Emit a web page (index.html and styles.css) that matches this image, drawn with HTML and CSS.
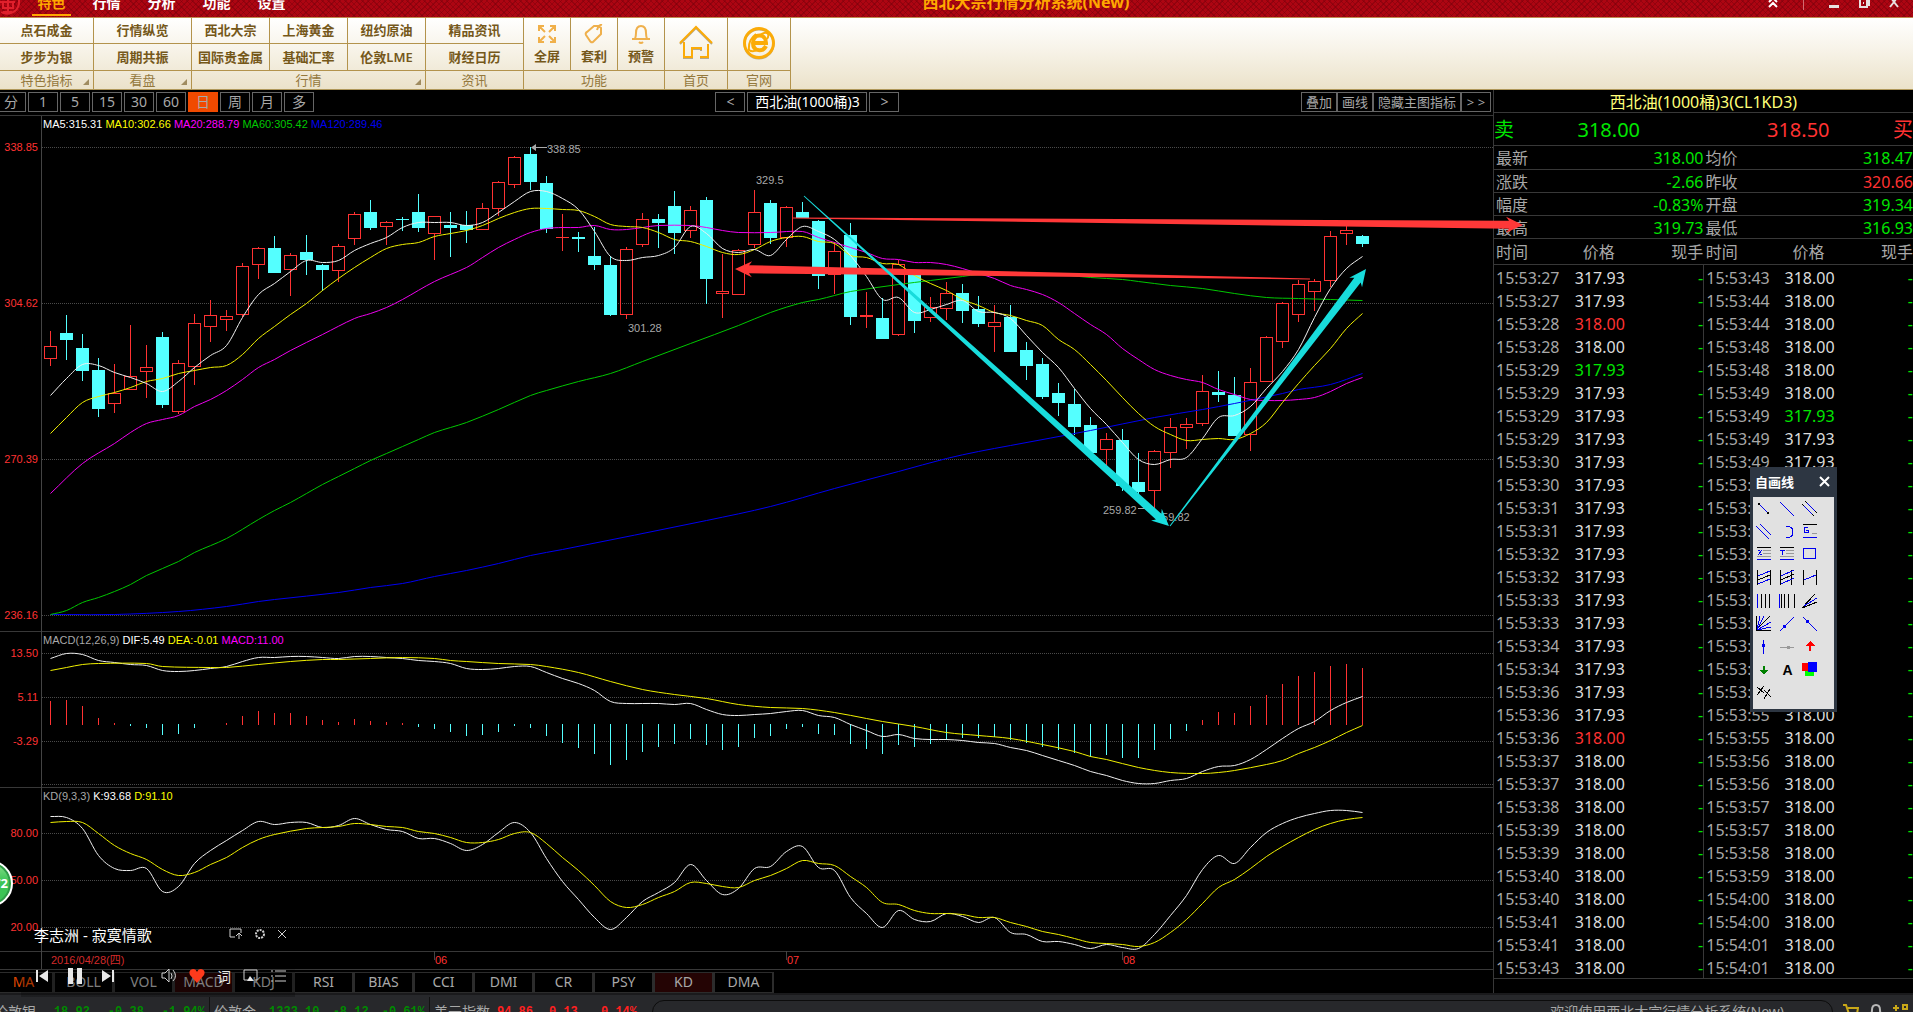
FILE: index.html
```
<!DOCTYPE html>
<html lang="zh-CN">
<head>
<meta charset="UTF-8">
<meta name="viewport" content="width=device-width, initial-scale=1.0">
<title>西北大宗行情分析系统(New)</title>
<link rel="stylesheet" href="styles.css">
</head>
<body>
<header class="titlebar">
    <svg class="logo" width="22" height="17" viewBox="0 0 22 17" fill="none" stroke="#e0202c" stroke-width="2">
        <path d="M1 12 A12 12 0 0 0 19 4 V0 M0 2 H15 M3 2 V8 H13 V2 M8 0 V14 M3 12 H12"/>
    </svg>
    <nav class="menu">
        <a href="#" class="active">特色</a>
        <a href="#">行情</a>
        <a href="#">分析</a>
        <a href="#">功能</a>
        <a href="#">设置</a>
    </nav>
    <div class="app-title">西北大宗行情分析系统(New)</div>
    <div class="window-buttons">
        <button aria-label="收起"><svg width="12" height="17" viewBox="0 0 12 17" fill="none" stroke="#fff" stroke-width="2"><path d="M2 2 L6 -2 L10 2 M2 7 L6 3 L10 7"/></svg></button>
        <span class="divider"></span>
        <button aria-label="最小化"><svg width="12" height="17"><path fill="#e8e0e0" d="M1 5h10v3H1z"/></svg></button>
        <button aria-label="还原"><svg width="12" height="17" fill="none" stroke="#e8e0e0" stroke-width="2"><path d="M2 0 V7 H9 V0 M11 0 V6"/><path d="M5 3 H6" /></svg></button>
        <button aria-label="关闭"><svg width="12" height="17" fill="none" stroke="#e8e0e0" stroke-width="2"><path d="M2 7 L6 2 L10 7 M4 -1 L6 2 L8 -1"/></svg></button>
    </div>
</header>

<div class="ribbon">
    <section class="group">
        <div class="cells cols-94">
            <button>点石成金</button>
            <button>步步为银</button>
        </div>
        <div class="group-name">特色指标<i class="corner"></i></div>
    </section>
    <section class="group">
        <div class="cells cols-98">
            <button>行情纵览</button>
            <button>周期共振</button>
        </div>
        <div class="group-name">看盘<i class="corner"></i></div>
    </section>
    <section class="group">
        <div class="cells cols-78">
            <button>西北大宗</button>
            <button>上海黄金</button>
            <button>纽约原油</button>
            <button>国际贵金属</button>
            <button>基础汇率</button>
            <button>伦敦LME</button>
        </div>
        <div class="group-name">行情<i class="corner"></i></div>
    </section>
    <section class="group">
        <div class="cells cols-98">
            <button>精品资讯</button>
            <button>财经日历</button>
        </div>
        <div class="group-name">资讯</div>
    </section>
    <section class="group">
        <div class="tools">
            <button>
                <svg width="20" height="20" fill="none" stroke="#f0b04a" stroke-width="2"><path d="M2 7V2H7M2 2L8 8M13 2H18V7M18 2L12 8M2 13V18H7M2 18L8 12M13 18H18V13M18 18L12 12"/></svg>
                全屏
            </button>
            <button>
                <svg width="20" height="20" fill="none" stroke="#efb04c" stroke-width="2"><path d="M3 8L10 2H15L17 4V10L9 18Q7 19 6 17L2 11Q1 9 3 8zM13 6Q15 0 18 1"/></svg>
                套利
            </button>
            <button>
                <svg width="20" height="20" fill="none" stroke="#efb04c" stroke-width="2"><path d="M1 15H19M4 15Q5 12 5 9Q5 2 10 2Q15 2 15 9Q15 12 16 15M8 18Q10 20 12 18"/></svg>
                预警
            </button>
        </div>
        <div class="group-name">功能</div>
    </section>
    <section class="group">
        <div class="tools big">
            <button aria-label="首页">
                <svg width="36" height="36" fill="none" stroke="#b5a98c" stroke-width="2"><path id="house" d="M2 19L18 3L34 19M6 18V33H14V24H23V26M22 33H30V20"/><use href="#house" stroke="#fbab08" y="-1"/></svg>
            </button>
        </div>
        <div class="group-name">首页</div>
    </section>
    <section class="group">
        <div class="tools big">
            <button aria-label="官网">
                <svg width="36" height="36" fill="none" stroke="#fbab08"><circle cx="18" cy="19" r="14.5" stroke="#b5a98c" stroke-width="2"/><circle cx="18" cy="18" r="14.5" stroke-width="3"/><path stroke-width="4" d="M12 18H25C25 8 12 8 12 18C12 27 22 27 25 21"/><path stroke-width="2" d="M15 9Q7 15 8 25Q12 28 18 24M19 10Q25 6 27 9Q28 11 26 14"/></svg>
            </button>
        </div>
        <div class="group-name">官网</div>
    </section>
</div>

<main class="workspace">
    <div class="chart-area">
        <div class="chart-toolbar">
            <div class="periods">
                <button>分</button><button>1</button><button>5</button><button>15</button><button>30</button><button>60</button><button class="active">日</button><button>周</button><button>月</button><button>多</button>
            </div>
            <div class="symbol">
                <button>&lt;</button><button class="name">西北油(1000桶)3</button><button>&gt;</button>
            </div>
            <div class="options">
                <button>叠加</button><button>画线</button><button>隐藏主图指标</button><button>&gt; &gt;</button>
            </div>
        </div>
        <svg id="chart" class="chart"></svg>
        <nav class="indicators">
            <button class="main">MA</button><button>BOLL</button><button>VOL</button><button class="on">MACD</button><button>KDJ</button><button>RSI</button><button>BIAS</button><button>CCI</button><button>DMI</button><button>CR</button><button>PSY</button><button class="on">KD</button><button>DMA</button>
        </nav>
    </div>

    <aside class="quote">
        <h1>西北油(1000桶)3(CL1KD3)</h1>
        <div class="deal">
            <span class="down">卖</span><b class="down">318.00</b><b class="up">318.50</b><span class="up">买</span>
        </div>
        <table class="stats">
            <tr><th>最新</th><td class="down">318.00</td><th>均价</th><td class="down">318.47</td></tr>
            <tr><th>涨跌</th><td class="down">-2.66</td><th>昨收</th><td class="up">320.66</td></tr>
            <tr><th>幅度</th><td class="down">-0.83%</td><th>开盘</th><td class="down">319.34</td></tr>
            <tr><th>最高</th><td class="down">319.73</td><th>最低</th><td class="down">316.93</td></tr>
        </table>
        <div class="ticks">
            <table>
                <thead><tr><th>时间</th><th>价格</th><th>现手</th></tr></thead>
                <tbody id="ticks-left"></tbody>
            </table>
            <table>
                <thead><tr><th>时间</th><th>价格</th><th>现手</th></tr></thead>
                <tbody id="ticks-right"></tbody>
            </table>
        </div>
    </aside>
</main>

<footer class="statusbar">
    <div class="index low"><span>伦敦银</span><b>18.92</b><b>-0.38</b><b>-1.94%</b></div>
    <div class="index low"><span>伦敦金</span><b>1333.10</b><b>-8.12</b><b>-0.61%</b></div>
    <div class="index high"><span>美元指数</span><b>94.86</b><b>0.13</b><b>0.14%</b></div>
    <div class="notice">欢迎使用西北大宗行情分析系统(New)</div>
    <div class="status-icons">
        <svg width="16" height="16" fill="none" stroke="#c9a818" stroke-width="2"><path d="M0 2H3L6 11H14L15 5H5M6 14H14"/></svg>
        <svg width="16" height="16" fill="none" stroke="#b8b8b8" stroke-width="2"><path d="M2 14Q4 10 4 7Q4 2 8 2Q12 2 12 7Q12 10 14 14z"/></svg>
        <svg width="16" height="16" fill="none" stroke="#c9a818" stroke-width="2"><path d="M3 2V8M0 5H6M10 2H14V6H10zM2 10H6V14H2zM10 10H14V14H10z"/></svg>
    </div>
</footer>

<!-- line drawing palette -->
<div class="palette">
    <div class="palette-head">自画线<button aria-label="关闭"><svg width="11" height="11" stroke="#fff" stroke-width="2"><path d="M1 1L10 10M10 1L1 10"/></svg></button></div>
    <div class="palette-grid">
        <button aria-label="线段"><svg><path class="b" d="M4 4L14 14"/><path class="fk" d="M3 3h2v2h-2zM12 12h2v2h-2z"/></svg></button>
        <button aria-label="直线"><svg><path class="b" d="M2 2L16 16"/></svg></button>
        <button aria-label="通道线"><svg><path class="b" d="M4 1L16 13M1 4L13 16"/><path class="k" d="M4 1L6 3M14 11L16 13M1 4L3 6M11 14L13 16"/></svg></button>
        <button aria-label="平行线"><svg><path class="b" d="M5 1L16 12M1 3L14 16"/></svg></button>
        <button aria-label="圆弧线"><svg><path class="b" d="M8 3Q15 3 15 9Q15 15 8 15"/></svg></button>
        <button aria-label="黄金分割"><svg><path class="k" d="M2 1.5H16"/><path class="g" d="M11 10.5H16"/><path class="b" d="M2 14.5H16M7 4H3V9H7V7H5"/></svg></button>
        <button aria-label="百分比线"><svg><path class="k" d="M2 1.5H16"/><path class="g" d="M8 4.5H16M8 7.5H16M2 10.5H16"/><path class="b" d="M2 13.5H16M3 9L7 4M3 4H5M5 8H7"/></svg></button>
        <button aria-label="波段线"><svg><path class="k" d="M2 1.5H16"/><path class="g" d="M8 4.5H16M8 7.5H16M2 10.5H16"/><path class="b" d="M2 13.5H16M2 4H7M4.500 4V9"/></svg></button>
        <button aria-label="矩形"><svg><path class="b" d="M2.500 2.500H14.500V12.500H2.500z"/></svg></button>
        <button aria-label="线性回归带"><svg><path class="k" d="M2.500 1V16M15.500 1V16M3 11L15 6"/><path class="b" d="M3 7L15 2M3 15L15 10"/></svg></button>
        <button aria-label="延长回归带"><svg><path class="k" d="M2.500 1V16M13.500 1V16M3 11L16 5"/><path class="b" d="M3 7L16 1M3 15L16 9"/></svg></button>
        <button aria-label="回归线"><svg><path class="k" d="M2.500 1V16M15.500 1V16"/><path class="b" d="M3 11L15 6"/></svg></button>
        <button aria-label="周期线"><svg><path class="b" d="M2.500 2V16"/><path class="k" d="M6.500 2V16M10.500 2V16M14.500 2V16"/></svg></button>
        <button aria-label="斐波那契周期"><svg><path class="b" d="M1.500 2V16"/><path class="k" d="M3.500 2V16M6.500 2V16M10.500 2V16M16.500 2V16"/></svg></button>
        <button aria-label="阻速线"><svg><path class="k" d="M1 16L14 2M1 16L16 10"/><path class="b" d="M3 14L16 6"/></svg></button>
        <button aria-label="江恩角度线"><svg><path class="k" d="M1.500 1V15.500H16M1 15L15 1"/><path class="b" d="M2 15L5 1M2 15L9 1M2 15L16 7M2 15L16 12"/></svg></button>
        <button aria-label="上升射线"><svg><path class="b" d="M2 16L16 2"/><path class="fb" d="M5 10h3v3h-3z"/></svg></button>
        <button aria-label="下降射线"><svg><path class="b" d="M2 2L16 16"/><path class="fb" d="M5 5h3v3h-3z"/></svg></button>
        <button aria-label="垂直线"><svg><path class="b" d="M8.500 2V16"/><path class="fb" d="M7 6h3v3h-3z"/></svg></button>
        <button aria-label="水平线"><svg><path class="g" d="M2 9.500H16"/><path fill="#999" d="M9 8h3v3h-3z"/></svg></button>
        <button aria-label="上箭头"><svg><path fill="#f00" d="M9 3L14 8H10V13H8V8H4z"/></svg></button>
        <button aria-label="下箭头"><svg><path fill="#008000" d="M9 14L13 9H10V5H8V9H5z"/></svg></button>
        <button class="letter">A</button>
        <button aria-label="颜色"><svg><path fill="#0f0" d="M4 9h9v6H4z"/><path fill="#f00" d="M1 2h8v8H1z"/><path fill="#00f" d="M7 1h9v10H7z"/></svg></button>
        <button aria-label="删除"><svg><path class="k" d="M2 3L9 9M2 11L9 2M9 6L16 13M9 15L15 5"/></svg></button>
    </div>
</div>

<!-- desktop music player -->
<div class="player">
    <div class="player-top">
        <span class="song">李志洲 - 寂寞情歌</span>
        <button aria-label="桌面歌词"><svg width="14" height="12"><path d="M12 5V1H1V9H6M10 11V5M7 8L10 5L13 8"/></svg></button>
        <button aria-label="设置"><svg width="12" height="12"><circle cx="6" cy="6" r="4" stroke-width="2" stroke-dasharray="2 1"/></svg></button>
        <button aria-label="关闭播放器"><svg width="10" height="10"><path d="M1 1L9 9M9 1L1 9"/></svg></button>
    </div>
    <div class="player-controls">
        <button aria-label="上一首"><svg width="14" height="16"><path class="solid" d="M1 2h2v12H1zM13 2V14L4 8z"/></svg></button>
        <button aria-label="暂停"><svg width="14" height="16"><path class="solid" d="M0 0h5v16H0zM9 0h5v16H9z"/></svg></button>
        <button aria-label="下一首"><svg width="14" height="16"><path class="solid" d="M11 2h2v12h-2zM1 2V14L10 8z"/></svg></button>
        <button aria-label="音量" class="wide"><svg width="16" height="16"><path d="M1 5H4L8 1V14L4 10H1zM10 5Q12 8 10 11M12 2Q17 8 12 13"/></svg></button>
        <button aria-label="喜欢"><svg width="16" height="16"><path fill="#ff3a1c" stroke="none" d="M8 15L1 7Q-1 2 4 1Q7 1 8 4Q9 1 12 1Q17 2 15 7z"/></svg></button>
        <button>词</button>
        <button aria-label="投屏"><svg width="16" height="16"><path d="M5 12H1V2H14V12H12"/><path class="solid" d="M4 13L7 8L11 13z"/></svg></button>
        <button aria-label="列表"><svg width="16" height="16"><path d="M0 3H2M4 3H15M0 8H2M4 8H15M0 13H2M4 13H15"/></svg></button>
    </div>
</div>

<div class="memory-ball">72</div>

<script src="script.js"></script>
</body>
</html>
```
FILE: styles.css
```
* {
    box-sizing: border-box;
}
html {
    height: 100%;
    overflow: hidden;
}
body {
    margin: 0;
    height: 100%;
    position: relative;
    overflow: hidden;
    background: #000;
    color: #a8a8a8;
    font-family: "Noto Sans", "Noto Sans CJK SC", sans-serif;
    font-size: 14px;
}
button {
    margin: 0;
    padding: 0;
    border: 0;
    background: none;
    color: inherit;
    font: inherit;
    white-space: nowrap;
}
svg {
    display: block;
}
.up {
    color: #ff3232;
}
.down {
    color: #00e600;
}

/* title bar */
.titlebar {
    display: flex;
    height: 18px;
    border-bottom: 1px solid #c08a50;
    background-color: #ad0512;
    background-image:
        repeating-linear-gradient(45deg, transparent 0 3px, rgba(110, 0, 10, 0.4) 3px 4px),
        repeating-linear-gradient(-45deg, transparent 0 3px, rgba(110, 0, 10, 0.4) 3px 4px);
    overflow: hidden;
}
.menu {
    display: flex;
    gap: 16px;
    margin-left: 10px;
}
.menu a {
    width: 39px;
    height: 16px;
    color: #fff;
    font-weight: bold;
    line-height: 6px;
    text-align: center;
    text-decoration: none;
    white-space: nowrap;
}
.menu a.active {
    color: #ffa800;
    border-bottom: 2px solid #ffa800;
}
.app-title {
    flex: 1;
    padding-right: 6px;
    color: #ffa800;
    font-size: 16px;
    font-weight: bold;
    line-height: 4px;
    text-align: center;
    white-space: nowrap;
}
.window-buttons {
    display: flex;
    gap: 18px;
    padding-right: 13px;
}
.window-buttons .divider {
    width: 1px;
    height: 10px;
    margin: 0 6px;
    background: #d46a70;
}

/* ribbon */
.ribbon {
    display: flex;
    height: 72px;
    border-bottom: 1px solid #b0985a;
    background: linear-gradient(#fff, #f7f3e8 45%, #ebe2ca);
    color: #75581a;
    font-size: 13px;
}
.group {
    display: flex;
    flex-direction: column;
    border-right: 1px solid #b3934c;
}
.cells {
    display: grid;
    grid-template-rows: 26px 27px;
}
.cols-94 {
    grid-template-columns: 93px;
}
.cols-98 {
    grid-template-columns: 97px;
}
.cols-78 {
    grid-template-columns: 78px 78px 77px;
}
.cells button {
    padding-bottom: 2px;
    border-bottom: 1px solid #b3934c;
    font-weight: 600;
}
.cols-78 button:not(:nth-child(3n)) {
    border-right: 1px solid #b3934c;
}
.tools {
    display: flex;
    height: 53px;
    border-bottom: 1px solid #b3934c;
}
.tools button {
    display: flex;
    flex-direction: column;
    align-items: center;
    gap: 2px;
    width: 47px;
    padding-top: 6px;
    font-weight: 600;
    line-height: 20px;
}
.tools button:first-child {
    width: 46px;
}
.tools button + button {
    border-left: 1px solid #b3934c;
}
.tools.big button {
    width: 62px;
    padding-top: 7px;
}
.group-name {
    position: relative;
    height: 18px;
    color: #94783c;
    line-height: 18px;
    text-align: center;
}
.corner {
    position: absolute;
    right: 4px;
    bottom: 4px;
    border: 3px solid #a08c60;
    border-top-color: transparent;
    border-left-color: transparent;
}

/* workspace */
.workspace {
    display: flex;
    height: 903px;
}
.chart-area {
    position: relative;
    z-index: 1;
    flex: 1;
    min-width: 0;
}
.chart-toolbar {
    display: flex;
    justify-content: space-between;
    height: 26px;
    padding: 2px 2px 3px 0;
    border-bottom: 1px solid #383838;
}
.chart-toolbar button {
    height: 20px;
    min-width: 30px;
    border: 1px solid #666;
    line-height: 18px;
}
.periods,
.symbol {
    display: flex;
    gap: 2px;
}
.periods {
    margin-left: -4px;
}
.periods .active {
    background: #f04a00;
    border-color: #f04a00;
}
.symbol .name {
    width: 120px;
    color: #fff;
}
.options {
    display: flex;
}
.options button {
    padding: 0 4px;
    font-size: 13px;
}
.chart {
    width: 100%;
    height: 854px;
    overflow: visible;
    font-family: "Liberation Sans", "Noto Sans CJK SC", sans-serif;
    font-size: 11px;
}
.chart .frame {
    stroke: #383838;
}
.chart .grid {
    stroke: #4a4a4a;
    stroke-dasharray: 1 1;
}
.chart .axis {
    fill: #ff3232;
}
.chart .date {
    fill: #d22a2a;
}
.chart .mark {
    fill: #a8a8a8;
}
.crisp {
    shape-rendering: crispEdges;
}
.indicators {
    display: flex;
    height: 23px;
    margin-left: -6px;
    padding-top: 2px;
}
.indicators button {
    width: 60px;
    height: 21px;
    padding-bottom: 2px;
    border: 1px solid #2c2c2c;
    border-right-width: 2px;
    background: #000;
    line-height: 17px;
}
.indicators .main {
    color: #e04800;
}
.indicators .on {
    background: #240404;
}

/* quote panel */
.quote {
    width: 420px;
    border-left: 1px solid #383838;
    font-size: 16px;
}
.quote h1 {
    height: 23px;
    margin: 0;
    border-bottom: 1px solid #383838;
    color: #ffff78;
    font-size: 16px;
    font-weight: normal;
    line-height: 24px;
    text-align: center;
}
.deal {
    display: grid;
    grid-template-columns: 20px 1fr 1fr 20px;
    height: 33px;
    border-bottom: 1px solid #383838;
    font-size: 20px;
    line-height: 34px;
    text-align: center;
}
.deal b {
    font-weight: normal;
}
.quote table {
    width: 100%;
    border-collapse: collapse;
    table-layout: fixed;
}
.quote th {
    padding: 2px 2px 0;
    font-weight: normal;
    text-align: left;
}
.quote td {
    padding: 2px 0 0;
}
.stats tr {
    height: 23px;
    border-bottom: 1px solid #383838;
    line-height: 20px;
}
.stats th {
    width: 40px;
}
.stats td {
    text-align: right;
}
.ticks {
    display: flex;
    border-bottom: 1px solid #383838;
}
.ticks table {
    flex: 1;
}
.ticks thead tr {
    height: 26px;
    border-bottom: 1px solid #383838;
    line-height: 23px;
}
.ticks table + table tbody {
    border-left: 1px solid #383838;
}
.ticks th:nth-child(2) {
    padding-left: 19px;
}
.ticks th:last-child,
.ticks td:last-child {
    padding-right: 0;
    text-align: right;
}
.ticks tbody tr {
    height: 23px;
    line-height: 19px;
}
.ticks td {
    padding: 4px 1px 0 2px;
}
.ticks td:nth-child(2) {
    padding-left: 11px;
}
.ticks .price {
    color: #dcdcdc;
}
.ticks .price.up {
    color: #ff3232;
}
.ticks .price.down {
    color: #00e600;
}

/* status bar */
.statusbar {
    display: flex;
    height: 40px;
    padding-top: 2px;
    border-top: 2px solid #1a1a1c;
    background: #27282b;
    line-height: 30px;
    white-space: nowrap;
}
.index {
    display: flex;
    justify-content: space-between;
    width: 220px;
    padding: 0 4px;
    border-right: 1px solid #111;
}
.index:first-child {
    width: 218px;
    margin-left: -8px;
    padding-left: 2px;
}
.index b {
    font-family: "Liberation Mono", monospace;
    font-size: 12px;
}
.index.low b {
    color: #008a00;
}
.index.high {
    justify-content: flex-start;
    gap: 7px;
    border: 0;
}
.index.high b {
    width: 50px;
    color: #ff2020;
}
.notice {
    flex: 1;
    margin: 3px 10px 0 2px;
    padding: 0 48px 0 0;
    border: 1px solid #0c0c0c;
    border-radius: 12px;
    line-height: 22px;
    text-align: right;
}
.status-icons {
    display: flex;
    gap: 9px;
    padding: 6px 4px 0 0;
}

/* drawing palette */
.palette {
    position: absolute;
    top: 467px;
    right: 76px;
    z-index: 2;
    width: 87px;
    padding: 0 3px 3px;
    background: #2d3642;
}
.palette-head {
    display: flex;
    justify-content: space-between;
    align-items: center;
    height: 30px;
    padding: 0 4px 2px 2px;
    color: #fff;
    font-size: 13px;
    font-weight: bold;
}
.palette-grid {
    display: grid;
    grid-template-columns: 23px 23px 23px;
    grid-auto-rows: 23px;
    height: 212px;
    padding: 0 2px;
    background: #e1e1e1;
}
.palette-grid button {
    padding: 0;
}
.palette-grid svg {
    width: 18px;
    height: 18px;
    fill: none;
    shape-rendering: crispEdges;
}
.palette-grid .letter {
    padding-right: 4px;
    color: #000;
    font: bold 14px "Liberation Sans", sans-serif;
}
.b {
    stroke: #0000f0;
}
.k {
    stroke: #000;
}
.g {
    stroke: #999;
}
.fb {
    fill: #0000f0;
}
.fk {
    fill: #000;
}

/* music player */
.player {
    position: absolute;
    top: 922px;
    left: 21px;
    z-index: 2;
    width: 274px;
    height: 75px;
    background: linear-gradient(transparent 60%, rgba(0, 0, 0, 0.25) 70%);
    color: #e8e8e8;
}
.player svg {
    fill: none;
    stroke: #d0d0d0;
}
.player .solid {
    fill: #e8e8e8;
    stroke: none;
}
.player-top {
    display: flex;
    align-items: center;
    gap: 11px;
    height: 24px;
    padding-left: 13px;
}
.song {
    width: 184px;
    color: #fff;
    font-size: 15px;
}
.player-controls {
    display: flex;
    align-items: center;
    gap: 12px;
    height: 32px;
    margin-top: 14px;
    padding-left: 14px;
}
.player-controls button:nth-child(-n+2) {
    margin-right: 7px;
}
.player-controls .wide {
    margin-left: 34px;
}

.memory-ball {
    position: absolute;
    top: 860px;
    left: -34px;
    z-index: 2;
    width: 47px;
    height: 47px;
    padding-right: 3px;
    border: 2px solid #fff;
    border-radius: 50%;
    background: linear-gradient(#8be08b, #3cc456 45%);
    box-shadow: inset 0 0 0 2px #2f9a48;
    color: #fff;
    font-size: 13px;
    font-weight: bold;
    line-height: 42px;
    text-align: right;
}
```
FILE: script.js
```
const svg = document.getElementById('chart');
const NS = 'http://www.w3.org/2000/svg';
const FIRST = 50;
const STEP = 16;
const ZERO = 724;

// the plot data is in screen rows, the svg begins at row 116
const root = document.createElementNS(NS, 'g');
root.setAttribute('transform', 'translate(0,-116)');
svg.appendChild(root);

function add(tag, attrs, text) {
    const el = document.createElementNS(NS, tag);
    for (const k in attrs) el.setAttribute(k, attrs[k]);
    if (text) el.textContent = text;
    root.appendChild(el);
    return el;
}

function hline(y, cls, x1) {
    add('line', { x1: x1, x2: '100%', y1: y + 0.5, y2: y + 0.5, class: cls + ' crisp' });
}

function vline(x, y1, y2, color) {
    add('rect', { x: x, y: y1, width: 1, height: y2 - y1, fill: color, class: 'crisp' });
}

function label(x, y, text, cls, anchor) {
    add('text', { x: x, y: y, class: cls, 'text-anchor': anchor || 'start' }, text);
}

function legend(y, parts) {
    const t = add('text', { x: 43, y: y });
    parts.forEach(p => {
        const s = document.createElementNS(NS, 'tspan');
        s.setAttribute('fill', p[1]);
        s.textContent = p[0] + ' ';
        t.appendChild(s);
    });
}

// frame and grid
[631, 787, 951, 969].forEach(y => hline(y, 'frame', 0));
vline(41, 116, 969, '#444');
[[147, '338.85'], [303, '304.62'], [459, '270.39'], [615, '236.16'],
 [653, '13.50'], [697, '5.11'], [741, '-3.29'], [784, ''],
 [833, '80.00'], [880, '50.00'], [927, '20.00']].forEach(g => {
    hline(g[0], 'grid', 42);
    label(38, g[0] + 4, g[1], 'axis', 'end');
});
label(51, 964, '2016/04/28(四)', 'date');
[[434, '06'], [786, '07'], [1122, '08']].forEach(m => {
    vline(m[0], 951, 960, '#444');
    label(m[0] + 1, 964, m[1], 'axis');
});

// candles: direction, high, body top, body bottom, low
const candles = `u331,346,358,366 d315,333,340,360 d334,348,371,381 d358,370,409,417 u364,393,403,413
u325,376,389,389 u345,367,371,398 d332,337,405,408 u360,363,411,414 u314,323,366,385
u300,315,326,342 u310,316,319,331 u263,266,314,317 u247,248,264,279 d236,248,273,273
u253,255,269,296 d235,252,260,275 d264,265,270,291 u244,246,270,282 u212,214,238,245
d200,212,228,230 u221,222,226,245 d217,219,220,231 d194,212,228,232 u216,216,233,260
d212,225,228,257 d211,225,230,243 u203,208,229,229 u181,182,208,216 u156,157,184,188
d147,154,182,190 d176,183,229,233 u214,237,237,251 d232,237,239,252 d227,256,265,270
d256,265,315,316 u247,249,314,319 u213,219,244,247 d214,219,223,248 d191,206,233,254
u206,210,230,238 d197,200,279,304 u254,291,293,318 u249,250,294,294 u190,212,244,248
d200,203,238,244 u206,207,237,247 d202,212,218,218 d220,221,276,289 u242,251,274,294
d223,235,317,325 u292,315,316,328 d298,318,339,339 u260,264,334,336 d273,275,321,333
u297,307,317,322 u282,293,308,320 d284,293,311,323 d296,309,324,327 u305,322,326,352
d305,317,352,352 d342,350,366,380 d358,364,397,399 d383,393,403,416 d389,404,427,435
d417,425,453,453 u433,439,449,466 d429,440,486,491 d453,482,492,496 u450,451,490,508
u418,427,452,468 u418,424,427,449 u375,391,423,426 d371,392,395,402 d377,395,436,436
u368,382,434,451 u336,337,381,381 u302,303,341,348 u280,284,314,322 u279,281,291,311
u231,236,280,287 u226,230,233,245 d235,236,244,247`.split(/\s+/);

candles.forEach((c, i) => {
    const x = FIRST + i * STEP;
    const v = c.slice(1).split(',').map(Number);
    if (c[0] === 'd') {
        vline(x, v[0], v[3], '#54ffff');
        add('rect', { x: x - 6, y: v[1], width: 13, height: v[2] - v[1], fill: '#54ffff', class: 'crisp' });
    } else {
        vline(x, v[0], v[1], '#ff3232');
        vline(x, v[2], v[3], '#ff3232');
        add('rect', { x: x - 5.5, y: v[1] + 0.5, width: 12, height: v[2] - v[1], fill: 'none', stroke: '#ff3232', class: 'crisp' });
    }
});

// a doji has no body, only the cross bar
add('rect', { x: FIRST + 32 * STEP - 6, y: 237, width: 13, height: 1, fill: '#ff3232', class: 'crisp' });

// smooth line through "index:row" points; a point without an index follows the one before
function curve(data, color) {
    let next = 0;
    const p = data.split(/\s+/).map(s => {
        const a = s.split(':');
        if (a.length > 1) next = +a[0];
        return [FIRST + 0.5 + STEP * next++, +a[a.length - 1] + 0.5];
    });
    const slope = (a, b) => (b[1] - a[1]) / (b[0] - a[0]);
    let d = `M${p[0]}`;
    for (let i = 0; i < p.length - 1; i++) {
        const a = p[i - 1] || p[i], b = p[i], c = p[i + 1], e = p[i + 2] || c;
        const w = (c[0] - b[0]) / 3;
        const s1 = slope(a, c);
        const s2 = slope(b, e);
        d += `C${b[0] + w},${b[1] + s1 * w} ${c[0] - w},${c[1] - s2 * w} ${c[0]},${c[1]}`;
    }
    add('path', { d: d, fill: 'none', stroke: color });
}

const WHITE = '#f0f0f0', YELLOW = '#f0f000', PINK = '#f000f0', GREEN = '#00c800', BLUE = '#0000f0';

curve('614 614 4:614 8:611 11:606 13:601 599 18:592 20:587 22:583 24:576 26:570 28:563 30:555 32:549 41:520 45:506 49:488 53:471 56:458 58:451 60:445 65:430 69:417 72:409 74:403 77:393 389 80:384 82:373', BLUE);
curve('614 610 602 597 591 584 575 8:561 552 11:538 13:519 510 502 493 484 476 468 460 453 446 439 432 427 422 28:409 30:395 390 33:381 35:373 37:361 40:343 43:325 45:312 47:302 299 295 291 53:284 55:280 57:276 274 62:273 65:277 67:279 281 283 285 72:288 74:293 76:297 78:298 80:299 82:300', GREEN);
curve('493 2:463 4:443 432 423 419 415 406 399 390 379 367 359 350 17:334 19:318 313 307 299 24:281 26:267 257 247 239 232 228 227 227 225 229 229 227 225 40:225 227 230 232 45:232 47:231 237 242 247 252 258 259 262 262 264 268 273 278 285 289 294 302 313 324 334 348 359 369 375 379 382 389 394 399 400 400 399 397 391 383 377', PINK);
curve('433 417 402 396 392 387 381 378 373 370 367 365 354 338 326 314 303 290 278 267 257 248 244 242 236 233 230 225 218 212 208 208 209 210 216 224 226 227 232 239 241 246 252 254 249 241 237 236 241 243 255 257 263 264 275 283 290 299 305 312 315 320 325 339 349 364 380 397 413 426 434 440 439 438 439 433 422 402 383 365 348 328 313', YELLOW);
curve('395 378 364 365 372 377 383 391 381 367 355 345 317 294 283 271 260 262 260 250 243 237 227 222 222 222 225 222 212 201 191 191 198 209 231 256 260 257 255 247 226 233 248 252 249 255 239 226 231 239 255 276 299 297 312 309 304 300 311 312 318 335 352 367 388 408 424 442 459 464 459 457 438 417 415 406 388 371 349 317 288 268 256', WHITE);

// MACD histogram, height above the zero row
[23, 24, 18, 6, 1, -2, -4, -11, -10, -4, 0, 1, 8, 13, 11, 11, 8, 4, 2, 5, 3, 2, 1, -3, -5, -8, -12, -11, -8, -2,
 -4, -12, -19, -24, -30, -41, -36, -28, -23, -20, -15, -21, -26, -23, -14, -12, -5, -3, -10, -11, -20, -25, -30,
 -21, -23, -20, -16, -14, -14, -13, -16, -19, -23, -26, -29, -33, -31, -34, -34, -26, -15, -7,
 4, 12, 11, 18, 29, 40, 48, 52, 58, 60, 56].forEach((h, i) => {
    const x = FIRST + i * STEP;
    if (h > 0) vline(x, ZERO - h, ZERO + 1, '#ff3232');
    if (h < 0) vline(x, ZERO, ZERO - h, '#54ffff');
});
curve('658 653 654 660 662 664 665 670 671 670 668 666 661 657 657 656 656 657 658 656 656 657 658 660 661 663 668 669 668 666 666 672 678 683 690 701 703 703 703 704 703 709 714 715 714 713 711 710 715 717 724 730 736 734 738 739 739 740 742 743 747 750 755 760 765 771 775 780 783 783 780 778 771 766 765 759 749 738 728 721 710 702 696', WHITE);
curve('670 667 664 663 6:663 666 10:667 667 13:664 15:661 17:659 659 20:658 22:657 24:658 660 661 28:663 30:664 666 33:672 35:681 37:689 39:694 41:698 43:704 45:707 47:708 49:712 51:718 721 54:726 56:732 58:735 60:738 62:744 64:751 756 759 68:767 70:772 72:773 772 770 76:764 760 753 747 740 732 725', YELLOW);

curve('816 817 828 855 868 870 868 891 886 863 850 840 830 821 824 822 822 827 825 818 824 829 831 838 838 843 850 844 832 822 832 858 881 899 917 929 917 901 892 882 864 880 894 888 868 866 851 846 867 870 897 913 927 910 919 921 913 916 922 917 932 934 941 941 944 948 944 947 948 934 915 895 869 855 863 847 832 823 817 813 810 810 812', WHITE);
curve('822 821 822 833 845 853 859 869 875 872 864 857 847 839 834 16:828 827 826 823 824 826 827 831 833 837 842 842 839 833 832 843 857 870 885 901 907 904 897 891 882 883 886 887 880 875 868 860 863 865 876 887 902 904 910 913 913 914 917 917 922 926 931 934 938 942 943 944 946 942 932 919 903 887 879 868 856 846 837 829 823 819 817', YELLOW);

legend(128, [['MA5:315.31', '#fff'], ['MA10:302.66', '#ff0'], ['MA20:288.79', '#f0f'], ['MA60:305.42', '#00c800'], ['MA120:289.46', '#0000f0']]);
legend(644, [['MACD(12,26,9)', '#a8a8a8'], ['DIF:5.49', '#fff'], ['DEA:-0.01', '#ff0'], ['MACD:11.00', '#f0f']]);
legend(800, [['KD(9,3,3)', '#a8a8a8'], ['K:93.68', '#fff'], ['D:91.10', '#ff0']]);

label(547, 153, '338.85', 'mark');
add('path', { d: 'M531 147.5L536 144V151zM536 147H547V148H536z', class: 'mark' });
label(756, 184, '329.5', 'mark');
label(628, 332, '301.28', 'mark');
label(1103, 514, '259.82', 'mark');
add('path', { d: 'M1138 508H1147V509H1138z', class: 'mark' });
label(1156, 521, '259.82', 'mark');

// hand drawn arrows, thin at the tail
function arrow(x1, y1, x2, y2, color) {
    const len = Math.hypot(x2 - x1, y2 - y1);
    const ux = (x2 - x1) / len, uy = (y2 - y1) / len;
    const at = (back, side) => [x2 - ux * back - uy * side, y2 - uy * back + ux * side].join(',');
    add('polygon', {
        points: [at(len, 0.5), at(14, 4), at(17, 8), at(0, 0), at(17, -8), at(14, -4), at(len, -0.5)].join(' '),
        fill: color
    });
}
arrow(793, 218, 1523, 225, '#ff3838');
arrow(1310, 279, 735, 269, '#ff3838');
arrow(804, 196, 1169, 526, '#18dcdc');
arrow(1170, 526, 1366, 269, '#18dcdc');

// tick list: time, price, mark
function fillTicks(id, rows) {
    document.getElementById(id).innerHTML = rows.map(r =>
        `<tr><td>15:${r[0]}</td><td class="price ${r[2] || ''}">${r[1]}</td><td class="down">-</td></tr>`).join('');
}
const A = '317.93', B = '318.00';
fillTicks('ticks-left', [
    ['53:27', A], ['53:27', A], ['53:28', B, 'up'], ['53:28', B], ['53:29', A, 'down'], ['53:29', A], ['53:29', A], ['53:29', A],
    ['53:30', A], ['53:30', A], ['53:31', A], ['53:31', A], ['53:32', A], ['53:32', A], ['53:33', A], ['53:33', A],
    ['53:34', A], ['53:34', A], ['53:36', A], ['53:36', A], ['53:36', B, 'up'], ['53:37', B], ['53:37', B], ['53:38', B],
    ['53:39', B], ['53:39', B], ['53:40', B], ['53:40', B], ['53:41', B], ['53:41', B], ['53:43', B]
]);
fillTicks('ticks-right', [
    ['53:43', B], ['53:44', B], ['53:44', B], ['53:48', B], ['53:48', B], ['53:49', B], ['53:49', A, 'down'], ['53:49', A],
    ['53:49', A], ['53:50', A], ['53:50', A], ['53:51', A], ['53:51', A], ['53:52', A], ['53:52', A], ['53:53', A],
    ['53:53', A], ['53:54', A], ['53:54', A], ['53:55', B], ['53:55', B], ['53:56', B], ['53:56', B], ['53:57', B],
    ['53:57', B], ['53:58', B], ['53:59', B], ['54:00', B], ['54:00', B], ['54:01', B], ['54:01', B]
]);
```
